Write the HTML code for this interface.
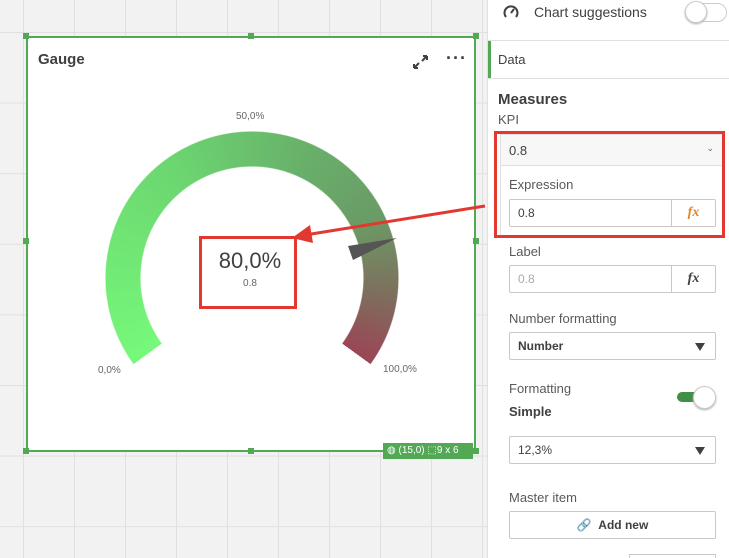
<!DOCTYPE html>
<html><head><style>
*{box-sizing:border-box;margin:0;padding:0}
html,body{width:729px;height:558px;overflow:hidden}
body{position:relative;font-family:"Liberation Sans",sans-serif;color:#404040;background:#f2f2f2}
.abs{position:absolute}
.canvas{left:0;top:0;width:487px;height:558px;background-color:#f2f2f2;
background-image:linear-gradient(to right,#e0e0e0 1px,transparent 1px),linear-gradient(to bottom,#e0e0e0 1px,transparent 1px);
background-size:51px 70.6px;background-position:23px 32px}
.card{left:26px;top:36px;width:450px;height:416px;background:#fff;border:2px solid #52a855}
.h{width:6px;height:6px;background:#52a855;position:absolute}
.panel{left:487px;top:0;width:242px;height:558px;background:#fff;border-left:1px solid #e0e0e0}
.lbl{font-size:13px;color:#595959}
.inp{border:1px solid #c8c8c8;border-radius:2px;background:#fff;height:28px;font-size:12px;display:flex;align-items:center;padding-left:8px}
.fx{position:absolute;right:0;top:0;width:44px;height:26px;border-left:1px solid #c8c8c8;color:#e0872e;font-family:"Liberation Serif",serif;font-style:italic;font-weight:bold;font-size:14px;text-align:center;line-height:26px}
.tri{position:absolute;right:10px;top:10px;width:0;height:0;border-left:5px solid transparent;border-right:5px solid transparent;border-top:8px solid #404040}
</style></head><body>
<div class="abs canvas"></div>
<div class="abs card">
  <div class="abs" style="left:10px;top:13px;font-weight:bold;font-size:15px;color:#404040">Gauge</div>
  <svg class="abs" style="left:383px;top:15px" width="20" height="18" viewBox="0 0 20 18"><path d="M3 15 L8 10 M3 15 h4 M3 15 v-4 M16 3 L11 8 M16 3 h-4 M16 3 v4" stroke="#404040" stroke-width="2" fill="none"/></svg>
  <div class="abs" style="left:418px;top:10px;font-size:18px;font-weight:bold;letter-spacing:1px;color:#404040">···</div>
  <div class="abs" style="left:77px;top:93px;width:294px;height:294px;border-radius:50%;background:conic-gradient(from -126deg,#76f97a 0deg,#6cd670 90deg,#68b06a 150deg,#6b9b66 190deg,#7f6c5c 225deg,#9b4556 252deg,transparent 252deg);-webkit-mask:radial-gradient(circle,transparent 111px,#000 112px,#000 146px,transparent 147px);mask:radial-gradient(circle,transparent 111px,#000 112px,#000 146px,transparent 147px)"></div>
  <div class="abs" style="left:77px;top:93px;width:294px;height:294px;border-radius:50%;background:conic-gradient(from 126deg,#fff 0deg,#fff 108deg,transparent 108deg)"></div>
  <svg class="abs" style="left:0;top:0" width="450" height="416"><polygon points="320,208 369,200 325,222" fill="#555"/></svg>
  <div class="abs" style="left:208px;top:73px;font-size:10px;color:#666">50,0%</div>
  <div class="abs" style="left:70px;top:327px;font-size:10px;color:#666">0,0%</div>
  <div class="abs" style="left:355px;top:326px;font-size:10px;color:#666">100,0%</div>
  <div class="abs" style="left:174px;top:210px;width:96px;text-align:center;font-size:22px;color:#404040">80,0%</div>
  <div class="abs" style="left:174px;top:240px;width:96px;text-align:center;font-size:10px;color:#666">0.8</div>
  <div class="abs" style="left:355px;top:405px;width:90px;height:16px;background:#52a855;color:#fff;font-size:10px;line-height:16px;padding-left:4px">◍ (15,0) ⬚9 x 6</div>
</div>
<div class="h" style="left:23px;top:33px"></div><div class="h" style="left:248px;top:33px"></div><div class="h" style="left:473px;top:33px"></div>
<div class="h" style="left:23px;top:238px"></div><div class="h" style="left:473px;top:238px"></div>
<div class="h" style="left:23px;top:448px"></div><div class="h" style="left:248px;top:448px"></div><div class="h" style="left:473px;top:448px"></div>
<div class="abs" style="left:199px;top:236px;width:98px;height:73px;border:3px solid #e3382f"></div>
<svg class="abs" style="left:280px;top:195px" width="220" height="60"><line x1="205" y1="11" x2="25" y2="40" stroke="#e3382f" stroke-width="3"/><polygon points="12,43 30,30 33,48" fill="#e3382f"/></svg>

<div class="abs panel">
  <svg class="abs" style="left:15px;top:4px" width="16" height="16" viewBox="0 0 16 16"><path d="M3 13 A6.5 6.5 0 1 1 13 13" stroke="#404040" stroke-width="2" fill="none"/><line x1="8" y1="9" x2="11" y2="5" stroke="#404040" stroke-width="2"/></svg>
  <div class="abs" style="left:46px;top:4px;font-size:14px;color:#404040">Chart suggestions</div>
  <div class="abs" style="left:197px;top:3px;width:42px;height:19px;border:1px solid #ccc;border-radius:10px;background:#fff"></div>
  <div class="abs" style="left:197px;top:1px;width:22px;height:22px;border:1px solid #ccc;border-radius:50%;background:#fff;box-shadow:0 1px 2px #aaa"></div>
  <div class="abs" style="left:0;top:40px;width:242px;border-top:1px solid #e0e0e0"></div>
  <div class="abs" style="left:0;top:41px;width:3px;height:37px;background:#52a855"></div>
  <div class="abs" style="left:10px;top:52px;font-size:13px;color:#404040">Data</div>
  <div class="abs" style="left:0;top:78px;width:242px;border-top:1px solid #e0e0e0"></div>
  <div class="abs" style="left:10px;top:91px;font-size:15px;font-weight:bold;color:#404040">Measures</div>
  <div class="abs" style="left:10px;top:112px;font-size:13px;color:#595959">KPI</div>
  <div class="abs" style="left:12px;top:134px;width:223px;height:104px;border:1px solid #e0e0e0"></div>
  <div class="abs" style="left:13px;top:135px;width:221px;height:31px;background:#f7f7f7;border-bottom:1px solid #e0e0e0;font-size:13px;padding:8px 8px">0.8<span style="float:right;font-size:9px;color:#666">⌄</span></div>
  <div class="abs" style="left:6px;top:131px;width:231px;height:107px;border:3px solid #e3382f"></div>
  <div class="abs lbl" style="left:21px;top:177px">Expression</div>
  <div class="abs inp" style="left:21px;top:199px;width:207px">0.8<div class="fx">fx</div></div>
  <div class="abs lbl" style="left:21px;top:244px">Label</div>
  <div class="abs inp" style="left:21px;top:265px;width:207px;color:#aaa">0.8<div class="fx" style="color:#404040">fx</div></div>
  <div class="abs lbl" style="left:21px;top:311px">Number formatting</div>
  <div class="abs inp" style="left:21px;top:332px;width:207px;font-weight:bold">Number<div class="tri"></div></div>
  <div class="abs lbl" style="left:21px;top:381px">Formatting</div>
  <div class="abs" style="left:189px;top:392px;width:30px;height:10px;border-radius:5px;background:#3f8f46"></div>
  <div class="abs" style="left:205px;top:386px;width:23px;height:23px;border-radius:50%;background:#fff;border:1px solid #ccc;box-shadow:0 1px 2px #aaa"></div>
  <div class="abs" style="left:21px;top:404px;font-size:13px;font-weight:bold">Simple</div>
  <div class="abs inp" style="left:21px;top:436px;width:207px">12,3%<div class="tri"></div></div>
  <div class="abs lbl" style="left:21px;top:490px">Master item</div>
  <div class="abs inp" style="left:21px;top:511px;width:207px;justify-content:center;font-weight:bold;padding:0">🔗&nbsp;&nbsp;Add new</div>
  <div class="abs" style="left:141px;top:554px;width:87px;height:10px;border:1px solid #c8c8c8"></div>
</div>
</body></html>
